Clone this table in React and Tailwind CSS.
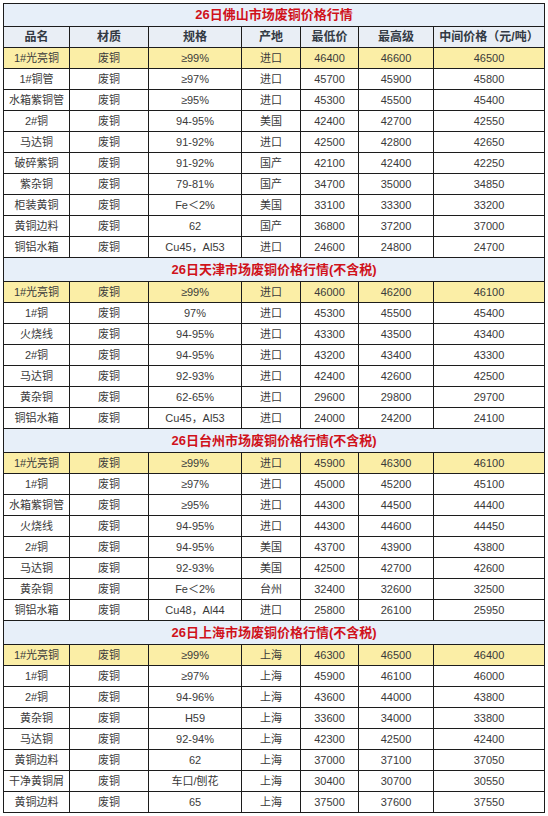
import React from "react";

const sections = [
  {
    title: "26日佛山市场废铜价格行情",
    header: true,
    rows: [
      ["1#光亮铜", "废铜", "≥99%", "进口", "46400", "46600", "46500"],
      ["1#铜管", "废铜", "≥97%", "进口", "45700", "45900", "45800"],
      ["水箱紫铜管", "废铜", "≥95%", "进口", "45300", "45500", "45400"],
      ["2#铜", "废铜", "94-95%", "美国", "42400", "42700", "42550"],
      ["马达铜", "废铜", "91-92%", "进口", "42500", "42800", "42650"],
      ["破碎紫铜", "废铜", "91-92%", "国产", "42100", "42400", "42250"],
      ["紫杂铜", "废铜", "79-81%", "国产", "34700", "35000", "34850"],
      ["柜装黄铜", "废铜", "Fe＜2%", "美国", "33100", "33300", "33200"],
      ["黄铜边料", "废铜", "62", "国产", "36800", "37200", "37000"],
      ["铜铝水箱", "废铜", "Cu45，Al53", "进口", "24600", "24800", "24700"],
    ],
  },
  {
    title: "26日天津市场废铜价格行情(不含税)",
    rows: [
      ["1#光亮铜", "废铜", "≥99%", "进口", "46000", "46200", "46100"],
      ["1#铜", "废铜", "97%", "进口", "45300", "45500", "45400"],
      ["火烧线", "废铜", "94-95%", "进口", "43300", "43500", "43400"],
      ["2#铜", "废铜", "94-95%", "进口", "43200", "43400", "43300"],
      ["马达铜", "废铜", "92-93%", "进口", "42400", "42600", "42500"],
      ["黄杂铜", "废铜", "62-65%", "进口", "29600", "29800", "29700"],
      ["铜铝水箱", "废铜", "Cu45，Al53", "进口", "24000", "24200", "24100"],
    ],
  },
  {
    title: "26日台州市场废铜价格行情(不含税)",
    rows: [
      ["1#光亮铜", "废铜", "≥99%", "进口", "45900", "46300", "46100"],
      ["1#铜", "废铜", "≥97%", "进口", "45000", "45200", "45100"],
      ["水箱紫铜管", "废铜", "≥95%", "进口", "44300", "44500", "44400"],
      ["火烧线", "废铜", "94-95%", "进口", "44300", "44600", "44450"],
      ["2#铜", "废铜", "94-95%", "美国", "43700", "43900", "43800"],
      ["马达铜", "废铜", "92-93%", "美国", "42500", "42700", "42600"],
      ["黄杂铜", "废铜", "Fe＜2%", "台州", "32400", "32600", "32500"],
      ["铜铝水箱", "废铜", "Cu48，Al44", "进口", "25800", "26100", "25950"],
    ],
  },
  {
    title: "26日上海市场废铜价格行情(不含税)",
    rows: [
      ["1#光亮铜", "废铜", "≥99%", "上海", "46300", "46500", "46400"],
      ["1#铜", "废铜", "≥97%", "上海", "45900", "46100", "46000"],
      ["2#铜", "废铜", "94-96%", "上海", "43600", "44000", "43800"],
      ["黄杂铜", "废铜", "H59", "上海", "33600", "34000", "33800"],
      ["马达铜", "废铜", "92-94%", "上海", "42300", "42500", "42400"],
      ["黄铜边料", "废铜", "62", "上海", "37000", "37100", "37050"],
      ["干净黄铜屑", "废铜", "车口/刨花", "上海", "30400", "30700", "30550"],
      ["黄铜边料", "废铜", "65", "上海", "37500", "37600", "37550"],
    ],
  },
];

const headers = ["品名", "材质", "规格", "产地", "最低价", "最高级", "中间价格（元/吨）"];

export default function App() {
  return (
    <div
      className="w-[548px] h-[816px] bg-white overflow-hidden pl-[3px] pt-[3px]"
      style={{ fontFamily: '"Liberation Sans", "Noto Sans CJK SC", sans-serif' }}
    >
      <div className="grid w-[541px] grid-cols-[66px_79px_93px_59px_58px_75px_111px] border-l border-t border-[#1c1c1c] box-content">
        {sections.map((s, si) => (
          <React.Fragment key={si}>
            <div
              className={`col-span-7 ${si === 0 ? "h-[23px]" : "h-[24px]"} border-r border-b border-[#1c1c1c] bg-[#e7eff9] flex items-center justify-center text-[13px] font-bold text-[#d0121b]`}
            >
              {s.title}
            </div>
            {s.header &&
              headers.map((h, i) => (
                <div
                  key={"h" + i}
                  className="h-[21px] border-r border-b border-[#1c1c1c] bg-[#e9eef5] flex items-center justify-center text-[12px] font-bold text-[#333a44] whitespace-nowrap"
                >
                  {h}
                </div>
              ))}
            {s.rows.map((r, ri) =>
              r.map((c, ci) => (
                <div
                  key={ri + "-" + ci}
                  className={`h-[21px] border-r border-b border-[#1c1c1c] flex items-center justify-center text-[11px] text-[#3a3a3a] whitespace-nowrap ${
                    ri === 0 ? "bg-[#fbeea6]" : "bg-white"
                  }`}
                >
                  {c}
                </div>
              ))
            )}
          </React.Fragment>
        ))}
      </div>
    </div>
  );
}
